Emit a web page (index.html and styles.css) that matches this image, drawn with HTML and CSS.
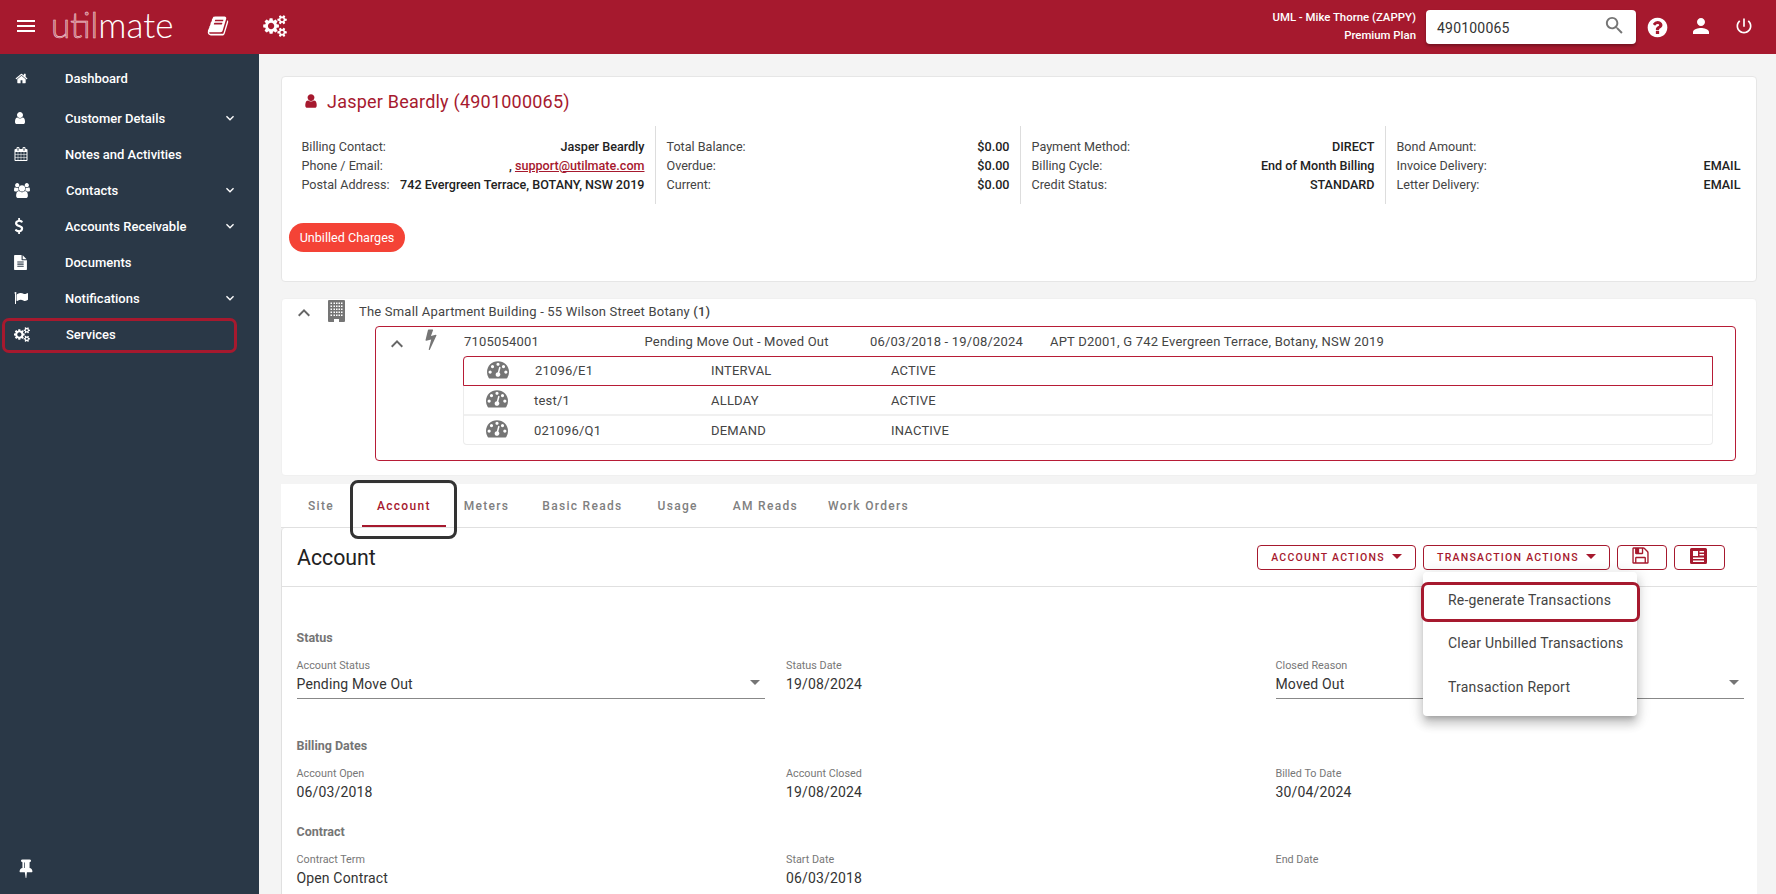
FILE: index.html
```html
<!DOCTYPE html>
<html lang="en">
<head>
<meta charset="utf-8">
<title>Utilmate</title>
<link rel="stylesheet" href="styles.css">
</head>
<body>
<svg class="sprite" aria-hidden="true">
  <symbol id="i-home" viewBox="0 0 1792 1792"><path d="M1472 992v480q0 26-19 45t-45 19h-384v-384h-256v384h-384q-26 0-45-19t-19-45v-480q0-1 .5-3t.5-3l575-474 575 474q1 2 1 6zm223-69l-62 74q-8 9-21 11h-3q-13 0-21-7l-692-577-692 577q-12 8-24 7-13-2-21-11l-62-74q-8-10-7-23.5t11-21.5l719-599q32-26 76-26t76 26l244 204v-195q0-14 9-23t23-9h192q14 0 23 9t9 23v408l219 182q10 8 11 21.5t-7 23.5z"/></symbol>
  <symbol id="i-user" viewBox="0 0 1792 1792"><path d="M1536 1399q0 109-62.5 187t-150.5 78h-854q-88 0-150.5-78t-62.5-187q0-85 8.5-160.5t31.5-152 58.5-131 94-89 134.5-34.5q131 128 313 128t313-128q76 0 134.5 34.5t94 89 58.5 131 31.5 152 8.5 160.5zm-256-887q0 159-112.5 271.5t-271.5 112.5-271.5-112.5-112.5-271.5 112.5-271.5 271.5-112.5 271.5 112.5 112.5 271.5z"/></symbol>
  <symbol id="i-calendar" viewBox="0 0 1792 1792"><path d="M192 1664h288v-288h-288v288zm352 0h320v-288h-320v288zm-352-352h288v-320h-288v320zm352 0h320v-320h-320v320zm-352-384h288v-288h-288v288zm736 736h320v-288h-320v288zm-384-736h320v-288h-320v288zm768 736h288v-288h-288v288zm-384-352h320v-320h-320v320zm-352-864v-288q0-13-9.5-22.5t-22.5-9.5h-64q-13 0-22.5 9.5t-9.5 22.5v288q0 13 9.5 22.5t22.5 9.5h64q13 0 22.5-9.5t9.5-22.5zm736 864h288v-320h-288v320zm-384-384h320v-288h-320v288zm384 0h288v-288h-288v288zm32-480v-288q0-13-9.5-22.5t-22.5-9.5h-64q-13 0-22.5 9.5t-9.5 22.5v288q0 13 9.5 22.5t22.5 9.5h64q13 0 22.5-9.5t9.5-22.5zm384-64v1280q0 52-38 90t-90 38h-1408q-52 0-90-38t-38-90v-1280q0-52 38-90t90-38h128v-96q0-66 47-113t113-47h64q66 0 113 47t47 113v96h384v-96q0-66 47-113t113-47h64q66 0 113 47t47 113v96h128q52 0 90 38t38 90z"/></symbol>
  <symbol id="i-users" viewBox="0 0 1920 1792"><path d="M593 896q-162 5-265 128h-134q-82 0-138-40.5t-56-118.5q0-353 124-353 6 0 43.5 21t97.5 42.5 119 21.5q67 0 133-23-5 37-5 66 0 139 81 256zm1071 637q0 120-73 189.5t-194 69.5h-874q-121 0-194-69.5t-73-189.5q0-53 3.5-103.5t14-109 26.5-108.5 43-97.5 62-81 85.5-53.5 111.5-20q10 0 43 21.5t73 48 107 48 135 21.5 135-21.5 107-48 73-48 43-21.5q61 0 111.5 20t85.5 53.5 62 81 43 97.5 26.5 108.5 14 109 3.5 103.5zm-1024-1277q0 106-75 181t-181 75-181-75-75-181 75-181 181-75 181 75 75 181zm704 384q0 159-112.5 271.5t-271.5 112.5-271.5-112.5-112.5-271.5 112.5-271.5 271.5-112.5 271.5 112.5 112.5 271.5zm576 225q0 78-56 118.5t-138 40.5h-134q-103-123-265-128 81-117 81-256 0-29-5-66 66 23 133 23 59 0 119-21.5t97.5-42.5 43.5-21q124 0 124 353zm-128-609q0 106-75 181t-181 75-181-75-75-181 75-181 181-75 181 75 75 181z"/></symbol>
  <symbol id="i-usd" viewBox="0 0 1792 1792"><path d="M1362 1185q0 153-99.5 263.5t-258.5 136.5v175q0 14-9 23t-23 9h-135q-13 0-22.5-9.5t-9.5-22.5v-175q-66-9-127.5-31t-101.5-44.5-74-48-46.5-37.5-17.5-18q-17-21-2-41l103-135q7-10 23-12 15-2 24 9l2 2q113 99 243 125 37 8 74 8 81 0 142.5-43t61.5-122q0-28-15-53t-33.5-42-58.5-37.5-66-32-80-32.5q-39-16-61.5-25t-61.5-26.5-62.5-31-56.5-35.5-53.5-42.5-43.5-49-35.5-58-21-66.5-8.5-78q0-138 98-242t255-134v-180q0-13 9.5-22.5t22.5-9.5h135q14 0 23 9t9 23v176q57 6 110.5 23t87 33.5 63.5 37.5 39 29 15 14q17 18 5 38l-81 146q-8 15-23 16-14 3-27-7-3-3-14.5-12t-39-26.5-58.5-32-74.5-26-85.5-11.5q-95 0-155 43t-60 111q0 26 8.5 48t29.5 41.5 39.5 33 56 31 60.5 27 70 27.5q53 20 81 31.5t76 35 75.5 42.5 62 50 53 63.5 31.5 76.5 13 94z"/></symbol>
  <symbol id="i-file" viewBox="0 0 1792 1792"><path d="M1596 476q14 14 28 36h-472v-472q22 14 36 28zm-476 164h544v1056q0 40-28 68t-68 28h-1344q-40 0-68-28t-28-68v-1600q0-40 28-68t68-28h800v544q0 40 28 68t68 28zm160 736v-64q0-14-9-23t-23-9h-704q-14 0-23 9t-9 23v64q0 14 9 23t23 9h704q14 0 23-9t9-23zm0-256v-64q0-14-9-23t-23-9h-704q-14 0-23 9t-9 23v64q0 14 9 23t23 9h704q14 0 23-9t9-23zm0-256v-64q0-14-9-23t-23-9h-704q-14 0-23 9t-9 23v64q0 14 9 23t23 9h704q14 0 23-9t9-23z"/></symbol>
  <symbol id="i-flag" viewBox="0 0 1792 1792"><path d="M320 256q0 72-64 110v1266q0 13-9.5 22.5t-22.5 9.5h-64q-13 0-22.5-9.5t-9.5-22.5v-1266q-64-38-64-110 0-53 37.5-90.5t90.5-37.5 90.5 37.5 37.5 90.5zm1472 64v763q0 25-12.5 38.5t-39.5 27.5q-215 116-369 116-61 0-123.5-22t-108.5-48-115.5-48-142.5-22q-192 0-464 146-17 9-33 9-26 0-45-19t-19-45v-742q0-32 31-55 21-14 79-43 236-120 421-120 107 0 200 29t219 88q38 19 88 19 54 0 117.5-21t110-47 88-47 54.5-21q26 0 45 19t19 45z"/></symbol>
  <symbol id="i-cogs" viewBox="0 0 1920 1792"><path d="M896 896q0-106-75-181t-181-75-181 75-75 181 75 181 181 75 181-75 75-181zm768 512q0-52-38-90t-90-38-90 38-38 90q0 53 37.5 90.5t90.5 37.5 90.5-37.5 37.5-90.5zm0-1024q0-52-38-90t-90-38-90 38-38 90q0 53 37.5 90.5t90.5 37.5 90.5-37.5 37.5-90.5zm-384 421v185q0 10-7 19.5t-16 10.5l-155 24q-11 35-32 76 34 48 90 115 7 11 7 20 0 12-7 19-23 30-82.5 89.5t-78.5 59.5q-11 0-21-7l-115-90q-37 19-77 31-11 108-23 155-7 24-30 24h-186q-11 0-20-7.5t-10-17.5l-23-153q-34-10-75-31l-118 89q-7 7-20 7-11 0-21-8-144-133-144-160 0-9 7-19 10-14 41-53t47-61q-23-44-35-82l-152-24q-10-1-17-9.5t-7-19.5v-185q0-10 7-19.5t16-10.5l155-24q11-35 32-76-34-48-90-115-7-11-7-20 0-12 7-20 22-30 82-89t79-59q11 0 21 7l115 90q34-18 77-32 11-108 23-154 7-24 30-24h186q11 0 20 7.5t10 17.5l23 153q34 10 75 31l118-89q8-7 20-7 11 0 21 8 144 133 144 160 0 8-7 19-12 16-42 54t-45 60q23 48 34 82l152 23q10 2 17 10.5t7 19.5zm640 533v140q0 16-149 31-12 27-30 52 51 113 51 138 0 4-4 7-122 71-124 71-8 0-46-47t-52-68q-20 2-30 2t-30-2q-14 21-52 68t-46 47q-2 0-124-71-4-3-4-7 0-25 51-138-18-25-30-52-149-15-149-31v-140q0-16 149-31 13-29 30-52-51-113-51-138 0-4 4-7 4-2 35-20t59-34 30-16q8 0 46 46.5t52 67.5q20-2 30-2t30 2q51-71 92-112l6-2q4 0 124 70 4 3 4 7 0 25-51 138 17 23 30 52 149 15 149 31zm0-1024v140q0 16-149 31-12 27-30 52 51 113 51 138 0 4-4 7-122 71-124 71-8 0-46-47t-52-68q-20 2-30 2t-30-2q-14 21-52 68t-46 47q-2 0-124-71-4-3-4-7 0-25 51-138-18-25-30-52-149-15-149-31v-140q0-16 149-31 13-29 30-52-51-113-51-138 0-4 4-7 4-2 35-20t59-34 30-16q8 0 46 46.5t52 67.5q20-2 30-2t30 2q51-71 92-112l6-2q4 0 124 70 4 3 4 7 0 25-51 138 17 23 30 52 149 15 149 31z"/></symbol>
  <symbol id="i-book" viewBox="0 0 1792 1792"><path d="M1703 478q40 57 18 129l-275 906q-19 64-76.5 107.5t-122.5 43.5h-923q-77 0-148.5-53.5t-99.5-131.5q-24-67-2-127 0-4 3-27t4-37q1-8-3-21.5t-3-19.5q2-11 8-21t16.5-23.5 16.5-23.5q23-38 45-91.5t30-91.5q3-10 .5-30t-.5-28q3-11 17-28t17-23q21-36 42-92t25-90q1-9-2.5-32t.5-28q4-13 22-30.5t22-22.5q19-26 42.5-84.5t27.5-96.5q1-8-3-25.5t-2-26.5q2-8 9-18t18-23 17-21q8-12 16.5-30.5t15-35 16-36 19.5-32 26.5-23.5 36-11.5 47.5 5.5l-1 3q38-9 51-9h761q74 0 114 56t18 130l-274 906q-36 119-71.5 153.5t-128.5 34.5h-869q-27 0-38 15-11 16-1 43 24 70 144 70h923q29 0 56-15.5t35-41.5l300-987q7-22 5-57 38 15 59 43zm-1064 2q-4 13 2 22.5t20 9.5h608q13 0 25.5-9.5t16.5-22.5l21-64q4-13-2-22.5t-20-9.5h-608q-13 0-25.5 9.5t-16.5 22.5zm-83 256q-4 13 2 22.5t20 9.5h608q13 0 25.5-9.5t16.5-22.5l21-64q4-13-2-22.5t-20-9.5h-608q-13 0-25.5 9.5t-16.5 22.5z"/></symbol>
  <symbol id="i-pin" viewBox="0 0 1792 1792"><path d="M800 864v-448q0-14-9-23t-23-9-23 9-9 23v448q0 14 9 23t23 9 23-9 9-23zm672 352q0 26-19 45t-45 19h-429l-51 483q-2 12-10.5 20.5t-20.5 8.5h-1q-27 0-32-27l-76-485h-404q-26 0-45-19t-19-45q0-123 78.5-221.5t177.5-98.5v-512q-52 0-90-38t-38-90 38-90 90-38h640q52 0 90 38t38 90-38 90-90 38v512q99 0 177.5 98.5t78.5 221.5z"/></symbol>
  <symbol id="i-bolt" viewBox="0 0 1792 1792"><path d="M1333 566q18 20 7 44l-540 1157q-13 25-42 25-4 0-14-2-17-5-25.5-19t-4.5-30l197-808-406 101q-4 1-12 1-18 0-31-11-18-15-13-39l201-825q4-14 16-23t28-9h328q19 0 32 12.5t13 29.5q0 8-5 18l-171 463 396-98q8-2 12-2 19 0 34 15z"/></symbol>
  <symbol id="i-gauge" viewBox="0 0 1792 1792"><path d="M384 1152q0-53-37.5-90.5t-90.5-37.5-90.5 37.5-37.5 90.5 37.5 90.5 90.5 37.5 90.5-37.5 37.5-90.5zm192-448q0-53-37.5-90.5t-90.5-37.5-90.5 37.5-37.5 90.5 37.5 90.5 90.5 37.5 90.5-37.5 37.5-90.5zm428 481l101-382q6-26-7.5-48.5t-38.5-29.5-48 6.5-30 39.5l-101 382q-60 5-107 43.5t-63 98.5q-20 77 20 146t117 89 146-20 89-117q16-60-6-117t-72-91zm660-33q0-53-37.5-90.5t-90.5-37.5-90.5 37.5-37.5 90.5 37.5 90.5 90.5 37.5 90.5-37.5 37.5-90.5zm-640-640q0-53-37.5-90.5t-90.5-37.5-90.5 37.5-37.5 90.5 37.5 90.5 90.5 37.5 90.5-37.5 37.5-90.5zm448 192q0-53-37.5-90.5t-90.5-37.5-90.5 37.5-37.5 90.5 37.5 90.5 90.5 37.5 90.5-37.5 37.5-90.5zm320 448q0 261-141 483-19 29-54 29h-1402q-35 0-54-29-141-221-141-483 0-182 71-348t191-286 286-191 348-71 348 71 286 191 191 286 71 348z"/></symbol>
  <symbol id="i-save" viewBox="0 0 1792 1792"><path d="M512 1536h768v-384h-768v384zm896 0h128v-896q0-14-10-38.5t-20-34.5l-281-281q-10-10-34-20t-39-10v416q0 40-28 68t-68 28h-576q-40 0-68-28t-28-68v-416h-128v1280h128v-416q0-40 28-68t68-28h832q40 0 68 28t28 68v416zm-384-928v-320q0-13-9.5-22.5t-22.5-9.5h-192q-13 0-22.5 9.5t-9.5 22.5v320q0 13 9.5 22.5t22.5 9.5h192q13 0 22.5-9.5t9.5-22.5zm640 32v928q0 40-28 68t-68 28h-1344q-40 0-68-28t-28-68v-1344q0-40 28-68t68-28h928q40 0 88 20t76 48l280 280q28 28 48 76t20 88z"/></symbol>
  <symbol id="i-help" viewBox="0 0 1792 1792"><path d="M1024 1376v-192q0-14-9-23t-23-9h-192q-14 0-23 9t-9 23v192q0 14 9 23t23 9h192q14 0 23-9t9-23zm256-672q0-88-55.5-163t-138.5-116-170-41q-243 0-371 213-15 24 8 42l132 100q7 6 19 6 16 0 25-12 53-68 86-92 34-24 86-24 48 0 85.5 26t37.5 59q0 38-20 61t-68 45q-63 28-115.5 86.5t-52.5 125.5v36q0 14 9 23t23 9h192q14 0 23-9t9-23q0-19 21.5-49.5t54.5-49.5q32-18 49-28.5t46-35 44.5-48 28-60.5 12.5-81zm384 192q0 209-103 385.5t-279.5 279.5-385.5 103-385.5-103-279.5-279.5-103-385.5 103-385.5 279.5-279.5 385.5-103 385.5 103 279.5 279.5 103 385.5z"/></symbol>
  <symbol id="i-search" viewBox="0 0 24 24"><path d="M15.5 14h-.79l-.28-.27C15.41 12.59 16 11.11 16 9.5 16 5.91 13.09 3 9.5 3S3 5.91 3 9.5 5.91 16 9.5 16c1.61 0 3.09-.59 4.23-1.57l.27.28v.79l5 4.99L20.49 19l-4.99-5zm-6 0C7.01 14 5 11.99 5 9.5S7.01 5 9.5 5 14 7.01 14 9.5 11.99 14 9.5 14z"/></symbol>
  <symbol id="i-person" viewBox="0 0 24 24"><path d="M12 12c2.21 0 4-1.79 4-4s-1.79-4-4-4-4 1.79-4 4 1.79 4 4 4zm0 2c-2.67 0-8 1.34-8 4v2h16v-2c0-2.66-5.33-4-8-4z"/></symbol>
  <symbol id="i-power" viewBox="0 0 24 24"><path d="M13 3h-2v10h2V3zm4.83 2.17l-1.42 1.42C17.99 7.86 19 9.81 19 12c0 3.87-3.13 7-7 7s-7-3.13-7-7c0-2.19 1.01-4.14 2.58-5.42L6.17 5.17C4.23 6.82 3 9.26 3 12c0 4.97 4.03 9 9 9s9-4.03 9-9c0-2.74-1.23-5.18-3.17-6.83z"/></symbol>
  <symbol id="i-menu" viewBox="0 0 24 24"><path d="M3 18h18v-2H3v2zm0-5h18v-2H3v2zm0-7v2h18V6H3z"/></symbol>
  <symbol id="i-down" viewBox="0 0 24 24"><path d="M16.59 8.59L12 13.17 7.41 8.59 6 10l6 6 6-6z"/></symbol>
  <symbol id="i-up" viewBox="0 0 24 24"><path d="M12 8l-6 6 1.41 1.41L12 10.83l4.59 4.58L18 14z"/></symbol>
  <symbol id="i-building" viewBox="0 0 17 22"><path fill-rule="evenodd" d="M1 0h15a1 1 0 0 1 1 1v20a1 1 0 0 1-1 1H11v-3H6v3H1a1 1 0 0 1-1-1V1a1 1 0 0 1 1-1zM2.500 2.500v1.500H4V2.500zM5.500 2.500v1.500H7V2.500zM8 2.500v1.500h1.500V2.500zM10.500 2.500v1.500H12V2.500zM13 2.500v1.500h1.500V2.500zM2.500 5.500V7H4V5.500zM5.500 5.500V7H7V5.500zM8 5.500V7h1.500V5.500zM10.500 5.500V7H12V5.500zM13 5.500V7h1.500V5.500zM2.500 8.500V10H4V8.500zM5.500 8.500V10H7V8.500zM8 8.500V10h1.500V8.500zM10.500 8.500V10H12V8.500zM13 8.500V10h1.500V8.500zM2.500 11.500V13H4v-1.500zM5.500 11.500V13H7v-1.500zM8 11.500V13h1.500v-1.500zM10.500 11.500V13H12v-1.500zM13 11.500V13h1.500v-1.500zM2.500 14.500V16H4v-1.500zM5.500 14.500V16H7v-1.500zM8 14.500V16h1.500v-1.500zM10.500 14.500V16H12v-1.500zM13 14.500V16h1.500v-1.500z"/></symbol>
  <symbol id="i-news" viewBox="0 0 17 16"><path fill-rule="evenodd" d="M1.500 0h14A1.500 1.500 0 0 1 17 1.500v13a1.500 1.500 0 0 1-1.500 1.500h-14A1.500 1.500 0 0 1 0 14.500v-13A1.500 1.500 0 0 1 1.500 0zM3 3v5h5V3zM9.500 3v1.500H14V3zM9.500 6v1.500H14V6zM3 9.500V11h11V9.500zM3 12.500V14h11v-1.500z"/></symbol>
</svg>

<header class="topbar">
  <svg class="ico-menu"><use href="#i-menu"/></svg>
  <div class="logo"><span class="logo-util">util</span><span class="logo-mate">mate</span></div>
  <svg class="ico-book"><use href="#i-book"/></svg>
  <svg class="ico-cogs"><use href="#i-cogs"/></svg>
  <div class="account-info">
    <div>UML - Mike Thorne (ZAPPY)</div>
    <div>Premium Plan</div>
  </div>
  <div class="search">
    <span>490100065</span>
    <svg class="ico-search"><use href="#i-search"/></svg>
  </div>
  <svg class="ico-help"><use href="#i-help"/></svg>
  <svg class="ico-person"><use href="#i-person"/></svg>
  <svg class="ico-power"><use href="#i-power"/></svg>
</header>

<div class="shell">
  <nav class="sidebar">
    <a class="nav-item nav-first"><svg class="nav-ico nav-ico-home"><use href="#i-home"/></svg><span>Dashboard</span></a>
    <a class="nav-item"><svg class="nav-ico nav-ico-user"><use href="#i-user"/></svg><span>Customer Details</span><svg class="nav-caret"><use href="#i-down"/></svg></a>
    <a class="nav-item"><svg class="nav-ico"><use href="#i-calendar"/></svg><span>Notes and Activities</span></a>
    <a class="nav-item"><svg class="nav-ico nav-ico-wide"><use href="#i-users"/></svg><span>Contacts</span><svg class="nav-caret"><use href="#i-down"/></svg></a>
    <a class="nav-item"><svg class="nav-ico nav-ico-usd"><use href="#i-usd"/></svg><span>Accounts Receivable</span><svg class="nav-caret"><use href="#i-down"/></svg></a>
    <a class="nav-item"><svg class="nav-ico nav-ico-file"><use href="#i-file"/></svg><span>Documents</span></a>
    <a class="nav-item"><svg class="nav-ico"><use href="#i-flag"/></svg><span>Notifications</span><svg class="nav-caret"><use href="#i-down"/></svg></a>
    <a class="nav-item nav-marked"><svg class="nav-ico nav-ico-wide"><use href="#i-cogs"/></svg><span>Services</span></a>
    <svg class="ico-pin"><use href="#i-pin"/></svg>
  </nav>

  <main class="content">
    <section class="card customer">
      <h1 class="customer-title"><svg class="ico-title"><use href="#i-user"/></svg>Jasper Beardly (4901000065)</h1>
      <div class="info-grid">
        <div class="info-col">
          <div class="info-row"><span>Billing Contact:</span><b>Jasper Beardly</b></div>
          <div class="info-row"><span>Phone / Email:</span><b>, <a class="mail">support@utilmate.com</a></b></div>
          <div class="info-row"><span>Postal Address:</span><b>742 Evergreen Terrace, BOTANY, NSW 2019</b></div>
        </div>
        <div class="info-col">
          <div class="info-row"><span>Total Balance:</span><b>$0.00</b></div>
          <div class="info-row"><span>Overdue:</span><b>$0.00</b></div>
          <div class="info-row"><span>Current:</span><b>$0.00</b></div>
        </div>
        <div class="info-col">
          <div class="info-row"><span>Payment Method:</span><b>DIRECT</b></div>
          <div class="info-row"><span>Billing Cycle:</span><b>End of Month Billing</b></div>
          <div class="info-row"><span>Credit Status:</span><b>STANDARD</b></div>
        </div>
        <div class="info-col">
          <div class="info-row"><span>Bond Amount:</span><b></b></div>
          <div class="info-row"><span>Invoice Delivery:</span><b>EMAIL</b></div>
          <div class="info-row"><span>Letter Delivery:</span><b>EMAIL</b></div>
        </div>
      </div>
      <button class="pill">Unbilled Charges</button>
    </section>

    <section class="card site">
      <div class="site-head">
        <svg class="chev"><use href="#i-up"/></svg>
        <svg class="ico-building"><use href="#i-building"/></svg>
        <span>The Small Apartment Building - 55 Wilson Street Botany <b>(1)</b></span>
      </div>
      <div class="service-box">
        <div class="service-head">
          <svg class="chev"><use href="#i-up"/></svg>
          <svg class="ico-bolt"><use href="#i-bolt"/></svg>
          <span class="sc-1">7105054001</span>
          <span class="sc-2">Pending Move Out - Moved Out</span>
          <span class="sc-3">06/03/2018 - 19/08/2024</span>
          <span>APT D2001, G 742 Evergreen Terrace, Botany, NSW 2019</span>
        </div>
        <div class="meters">
          <div class="meter meter-active"><svg class="ico-gauge"><use href="#i-gauge"/></svg><span class="mc-1">21096/E1</span><span class="mc-2">INTERVAL</span><span>ACTIVE</span></div>
          <div class="meter"><svg class="ico-gauge"><use href="#i-gauge"/></svg><span class="mc-1">test/1</span><span class="mc-2">ALLDAY</span><span>ACTIVE</span></div>
          <div class="meter"><svg class="ico-gauge"><use href="#i-gauge"/></svg><span class="mc-1">021096/Q1</span><span class="mc-2">DEMAND</span><span>INACTIVE</span></div>
        </div>
      </div>
    </section>

    <div class="tabs">
      <a class="tab">Site</a>
      <a class="tab tab-active">Account</a>
      <a class="tab">Meters</a>
      <a class="tab">Basic Reads</a>
      <a class="tab">Usage</a>
      <a class="tab">AM Reads</a>
      <a class="tab">Work Orders</a>
    </div>

    <section class="panel">
      <div class="panel-head">
        <h2>Account</h2>
        <div class="actions">
          <button class="btn">ACCOUNT ACTIONS<i class="caret"></i></button>
          <div class="menu-anchor">
            <button class="btn btn-tx">TRANSACTION ACTIONS<i class="caret"></i></button>
            <div class="menu">
              <div class="menu-item menu-marked">Re-generate Transactions</div>
              <div class="menu-item">Clear Unbilled Transactions</div>
              <div class="menu-item menu-last">Transaction Report</div>
            </div>
          </div>
          <button class="btn btn-ico"><svg class="ico-save"><use href="#i-save"/></svg></button>
          <button class="btn btn-ico btn-last"><svg class="ico-news"><use href="#i-news"/></svg></button>
        </div>
      </div>
      <div class="form">
        <div class="fsec fsec-status">
          <h3>Status</h3>
          <div class="fgrid">
            <div class="field field-select"><label>Account Status</label><div class="val">Pending Move Out</div><i class="sel-caret"></i></div>
            <div class="field"><label>Status Date</label><div class="val">19/08/2024</div></div>
            <div class="field field-select"><label>Closed Reason</label><div class="val">Moved Out</div><i class="sel-caret"></i></div>
          </div>
        </div>
        <div class="fsec">
          <h3>Billing Dates</h3>
          <div class="fgrid">
            <div class="field"><label>Account Open</label><div class="val">06/03/2018</div></div>
            <div class="field"><label>Account Closed</label><div class="val">19/08/2024</div></div>
            <div class="field"><label>Billed To Date</label><div class="val">30/04/2024</div></div>
          </div>
        </div>
        <div class="fsec">
          <h3>Contract</h3>
          <div class="fgrid">
            <div class="field"><label>Contract Term</label><div class="val">Open Contract</div></div>
            <div class="field"><label>Start Date</label><div class="val">06/03/2018</div></div>
            <div class="field"><label>End Date</label><div class="val"></div></div>
          </div>
        </div>
      </div>
    </section>
  </main>
</div>
</body>
</html>
```

FILE: styles.css
```css
* { box-sizing: border-box; }
html, body { margin: 0; padding: 0; height: 894px; overflow: hidden; }
body { font-family: Roboto, "Liberation Sans", sans-serif; font-size: 13px; color: #444; background: #f4f4f4; }
svg { fill: currentColor; flex: none; display: block; }
.sprite { position: absolute; width: 0; height: 0; }
h1, h2, h3 { margin: 0; font-weight: 400; }
button { font-family: inherit; cursor: pointer; }

/* top bar */
.topbar { height: 54px; background: #a6192e; color: #fff; display: flex; align-items: center; padding-left: 14px; }
.ico-menu { width: 24px; height: 24px; margin-top: -3px; }
.logo { margin-left: 13px; margin-top: -6px; font-family: Lato, sans-serif; font-weight: 300; font-size: 35px; line-height: 40px; }
.logo-util { color: rgba(255,255,255,.3); -webkit-text-stroke: .6px #f0c8ce; }
.logo-mate { color: #fff; }
.ico-book { width: 22px; height: 22px; margin-left: 34px; margin-top: -2px; }
.ico-cogs { width: 24px; height: 22px; margin-left: 34px; margin-top: -2px; }
.account-info { margin-left: auto; text-align: right; font-size: 11.400px; font-weight: 500; line-height: 18px; margin-right: 10px; margin-top: -2px; }
.search { width: 210px; height: 34px; background: #fff; border-radius: 4px; box-shadow: 0 2px 3px rgba(0,0,0,.3); color: #333; display: flex; align-items: center; justify-content: space-between; padding: 0 10px 0 11px; font-size: 14px; letter-spacing: .2px; }
.search span { margin-top: 1px; }
.ico-search { width: 23px; height: 23px; color: #757575; margin-top: -4px; }
.ico-help { width: 23px; height: 23px; margin-left: 10px; }
.ico-person { width: 24px; height: 24px; margin-left: 20px; margin-top: -2px; }
.ico-power { width: 20px; height: 20px; margin-left: 21px; margin-right: 22px; margin-top: -2px; }

/* layout */
.shell { display: flex; height: 840px; }
.sidebar { width: 259px; flex: none; background: #2a3847; color: #fff; display: flex; flex-direction: column; padding-top: 6px; }
.nav-item { height: 36px; display: flex; align-items: center; padding: 0 21px 0 14px; font-weight: 500; font-size: 13px; }
.nav-first { margin-bottom: 4px; }
.nav-ico { width: 14px; height: 14px; margin-right: 37px; }
.nav-ico-home { width: 13px; height: 13px; margin-left: 1px; margin-right: 37px; }
.nav-ico-user { margin-left: -1px; margin-right: 38px; }
.nav-ico-usd { width: 16px; height: 16px; margin-left: -3px; margin-right: 38px; }
.nav-ico-file { width: 15px; height: 15px; margin-left: -1px; margin-right: 37px; }
.nav-ico-wide { width: 16px; height: 15px; margin-right: 36px; }
.nav-caret { width: 16px; height: 16px; margin-left: auto; }
.nav-marked { width: 235px; height: 35px; margin-left: 2px; padding: 0 0 2px 9px; border: 3px solid #a6192e; border-radius: 7px; margin-top: 2px; }
.ico-pin { width: 20px; height: 20px; margin: auto 0 16px 16px; }

.content { flex: 1; min-width: 0; padding: 22px 19px 0 22px; }
.card { background: #fff; border: 1px solid #e6e6e6; border-radius: 4px; }

/* customer */
.customer { height: 206px; padding: 11px 5px 0 9px; }
.customer-title { display: flex; align-items: center; height: 26px; font-size: 18px; color: #a6192e; padding-left: 12px; letter-spacing: .22px; }
.ico-title { width: 16px; height: 16px; margin-right: 8px; }
.info-grid { display: grid; grid-template-columns: repeat(4, 365px); margin-top: 12px; height: 78px; }
.info-col { display: flex; flex-direction: column; justify-content: center; padding: 0 10.500px; border-right: 1px solid #ddd; color: #444; font-size: 12.600px; }
.info-col:last-child { border-right: 0; }
.info-row { display: flex; justify-content: space-between; line-height: 19px; white-space: nowrap; }
.info-row b { font-weight: 500; color: #222; }
.mail { color: #a6192e; text-decoration: underline; }
.pill { display: block; margin: 19px 0 0 -2px; height: 29px; width: 116px; border: 0; border-radius: 15px; background: #f44336; color: #fff; font-size: 12.600px; padding: 0; }

/* site */
.site { margin-top: 16px; height: 178px; border-color: #f0f0f0; padding: 1px 20px 0 0; letter-spacing: .2px; }
.site-head { display: flex; align-items: center; height: 22px; padding-left: 10px; color: #444; }
.site-head b { font-weight: 500; }
.chev { width: 24px; height: 24px; color: #666; margin-top: 4px; }
.ico-building { width: 17px; height: 22px; color: #757575; margin-left: 12px; margin-right: 14px; }
.service-box { margin: 4px 0 0 93px; height: 135px; border: 1px solid #b71c36; border-radius: 4px; }
.service-head { display: flex; align-items: center; height: 29px; padding-left: 9px; }
.ico-bolt { width: 22px; height: 22px; color: #757575; margin: -6px 22px 0 11px; }
.sc-1 { width: 180.500px; }
.sc-2 { width: 225.500px; }
.sc-3 { width: 180px; }
.meters { margin: 0 22px 0 87px; border: 1px solid #ececec; border-top: 0; border-radius: 4px; }
.meter { display: flex; align-items: center; height: 30px; padding-left: 22px; border-bottom: 2px solid #f0f0f0; }
.meter:last-child { border-bottom: 0; height: 28px; }
.meter-active { border: 1px solid #b71c36; border-radius: 4px 0 0 0; margin: 0 -1px 0 -1px; padding: 0 0 2px 22px; }
.ico-gauge { width: 22px; height: 22px; color: #757575; margin: -5px 26px 0 0; }
.meter-active .ico-gauge { margin-right: 26px; margin-left: 1px; margin-top: -3px; }
.meter-active .mc-1 { width: 176px; }
.mc-1 { width: 177px; }
.mc-2 { width: 180px; }

/* tabs */
.tabs { margin-top: 8px; height: 44px; background: #fff; display: flex; border-bottom: 1px solid #e0e0e0; padding-left: 12px; }
.tab { position: relative; display: flex; align-items: center; padding: 0 15px; font-size: 12px; font-weight: 500; letter-spacing: 1.300px; color: #808080; margin-right: 2px; }
.tab:nth-child(2) { margin-left: 11px; }
.tab:nth-child(3) { margin-left: 1px; }
.tab:nth-child(4) { margin-left: 1px; }
.tab:nth-child(5) { margin-left: 3px; }
.tab:nth-child(6) { margin-left: 3px; }
.tab:nth-child(7) { margin-left: -2px; }
.tab-active { color: #a6192e; border-bottom: 2px solid #a6192e; padding-top: 2px; }
.tab-active::after { content: ""; position: absolute; left: -12px; right: -11px; top: -4px; bottom: -14px; border: 3px solid #333; border-radius: 8px; }

/* panel */
.panel { background: #fff; border-left: 1px solid #e0e0e0; height: 367px; border-radius: 4px 4px 0 0; }
.panel-head { height: 59px; display: flex; align-items: center; border-bottom: 1px solid #e0e0e0; padding: 0 32px 0 15px; }
.panel-head h2 { font-size: 21.300px; color: #222; line-height: 28px; margin-top: 1px; }
.actions { margin-left: auto; display: flex; gap: 7px; }
.btn { height: 25px; border: 1px solid #a6192e; border-radius: 4px; background: #fff; color: #a6192e; font-size: 10.500px; font-weight: 500; letter-spacing: 1.250px; padding: 0 8px; display: flex; align-items: center; justify-content: center; width: 159px; white-space: nowrap; }
.btn-tx { width: 187px; }
.btn-ico { width: 50px; padding: 0; }
.btn-last { width: 51px; }
.caret { width: 0; height: 0; border: 5px solid transparent; border-top-color: #a6192e; border-bottom: 0; margin: -2px 0 0 7px; }
.ico-save { width: 19px; height: 19px; margin: -3px 0 0 -4px; }
.ico-news { width: 17px; height: 16px; margin: -3px 0 0 -2px; }
.menu-anchor { position: relative; }
.menu { position: absolute; left: 0; top: 27px; width: 214px; height: 144px; background: #fff; border-radius: 4px; padding: 7px 0; box-shadow: 0 5px 5px -3px rgba(0,0,0,.2), 0 8px 10px 1px rgba(0,0,0,.14), 0 3px 14px 2px rgba(0,0,0,.12); z-index: 5; }
.menu-item { position: relative; height: 43px; display: flex; align-items: center; padding-left: 25px; font-size: 14px; letter-spacing: .2px; color: #444; }
.menu-last { padding-top: 2px; }
.menu-marked::after { content: ""; position: absolute; left: -2px; right: -3px; top: 3px; bottom: 0; border: 3px solid #a6192e; border-radius: 7px; }

/* form */
.form { padding: 41px 0 0 14.500px; }
.fsec { margin-bottom: 20px; }
.fsec-status { margin-bottom: 37px; }
.fsec h3 { font-size: 12.500px; font-weight: 700; line-height: 20px; color: #757575; margin-bottom: 10px; }
.fgrid { display: grid; grid-template-columns: repeat(3, 468px); column-gap: 21.500px; }
.field { position: relative; }
.field label { display: block; font-size: 10.800px; line-height: 14px; color: #777; margin: 1px 0; }
.val { font-size: 14px; line-height: 20px; letter-spacing: .15px; color: #333; min-height: 20px; }
.field-select { border-bottom: 1px solid #888; padding-bottom: 4px; }
.sel-caret { position: absolute; right: 5px; top: 22px; width: 0; height: 0; border: 5px solid transparent; border-top-color: #757575; border-bottom: 0; }
```
